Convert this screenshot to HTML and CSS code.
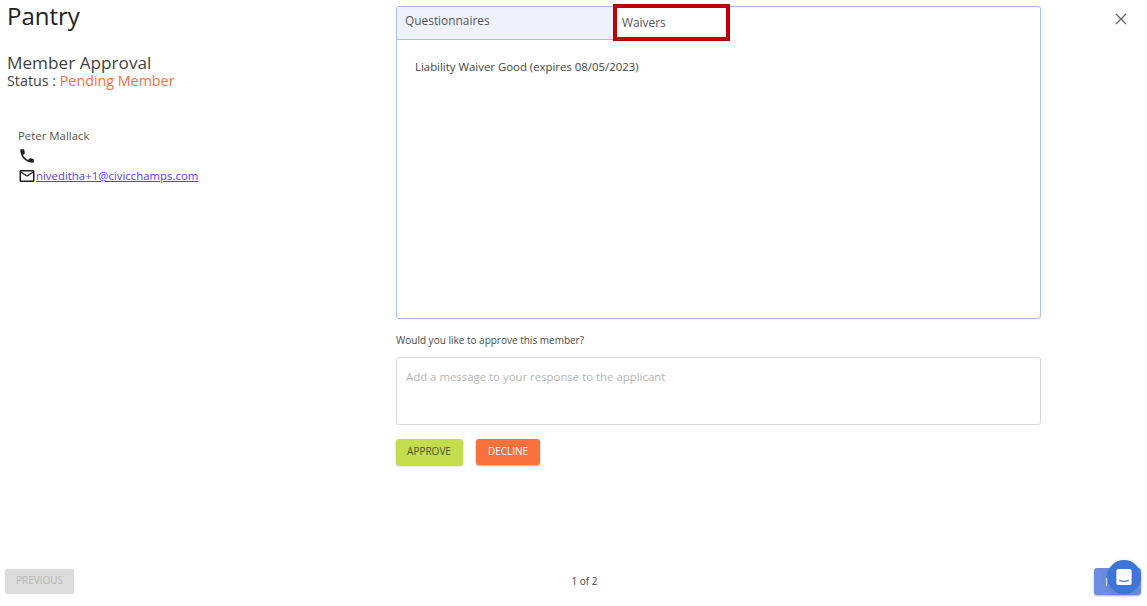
FILE: index.html
```html
<!DOCTYPE html>
<html lang="en">
<head>
<meta charset="utf-8">
<title>Member Approval</title>
<link rel="stylesheet" href="styles.css">
</head>
<body>
<div class="page">
  <div class="content">
    <aside class="side">
      <h1 class="org">Pantry</h1>
      <h2 class="title">Member Approval</h2>
      <div class="status">Status : <span class="pending">Pending Member</span></div>
      <div class="person">
        <div class="name">Peter Mallack</div>
        <div class="row">
          <svg class="icon" viewBox="0 0 24 24" width="18" height="18"><path fill="#1f1f1f" d="M6.62 10.79c1.44 2.83 3.76 5.14 6.59 6.59l2.2-2.2c.27-.27.67-.36 1.02-.24 1.12.37 2.33.57 3.57.57.55 0 1 .45 1 1V20c0 .55-.45 1-1 1-9.39 0-17-7.61-17-17 0-.55.45-1 1-1h3.5c.55 0 1 .45 1 1 0 1.25.2 2.45.57 3.57.11.35.03.74-.25 1.02l-2.2 2.2z"/></svg>
        </div>
        <div class="row">
          <svg class="icon" viewBox="0 0 24 24" width="18" height="18"><path fill="#1f1f1f" d="M22 6c0-1.1-.9-2-2-2H4c-1.1 0-2 .9-2 2v12c0 1.100.9 2 2 2h16c1.100 0 2-.9 2-2V6zm-2 0-8 5-8-5h16zm0 12H4V8l8 5 8-5v10z"/></svg>
          <a class="mail" href="#">niveditha+1@civicchamps.com</a>
        </div>
      </div>
    </aside>
    <main class="main">
      <div class="panel">
        <div class="tabs">
          <div class="tab tab-off">Questionnaires</div>
          <div class="tab tab-on">Waivers</div>
        </div>
        <div class="panel-body">Liability Waiver Good (expires 08/05/2023)</div>
      </div>
      <div class="ask">Would you like to approve this member?</div>
      <div class="message">Add a message to your response to the applicant</div>
      <div class="actions">
        <button class="btn approve">APPROVE</button>
        <button class="btn decline">DECLINE</button>
      </div>
    </main>
    <button class="close" aria-label="Close">
      <svg viewBox="0 0 12 12" width="12" height="12"><path d="M1 1l10 10M11 1L1 11" stroke="#666" stroke-width="1.3" fill="none"/></svg>
    </button>
  </div>
  <footer class="footer">
    <button class="btn prev">PREVIOUS</button>
    <div class="count">1 of 2</div>
    <button class="btn next">NEXT</button>
  </footer>
</div>
<div class="chat">
  <svg viewBox="0 0 22 24" width="16" height="18"><path fill="#fff" d="M3 1h16a2.500 2.500 0 0 1 2.500 2.500v17a2.500 2.500 0 0 1-2.500 2.500H3A2.500 2.500 0 0 1 .5 20.500v-17A2.500 2.500 0 0 1 3 1z"/><path d="M5 16.500c3.500 2 8.500 2 12 0" stroke="#3f74d8" stroke-width="1.600" fill="none" stroke-linecap="round"/></svg>
</div>
</body>
</html>
```
FILE: styles.css
```css
* { box-sizing: border-box; }
html, body { margin: 0; height: 606px; overflow: hidden; background: #fff; }
body { font-family: "Open Sans", sans-serif; color: #3f3f3f; }
.page { height: 606px; display: flex; flex-direction: column; }
.content { flex: 1; display: flex; align-items: flex-start; position: relative; }
.side { width: 396px; padding: 0 0 0 7px; flex: none; }
.org { margin: 0; font-size: 24px; font-weight: 400; line-height: 32px; color: #222; }
.title { margin: 19px 0 0; font-size: 17.2px; font-weight: 400; line-height: 23px; color: #3f3f3f; }
.status { font-size: 14.3px; line-height: 14px; color: #3f3f3f; }
.pending { color: #f76f3b; }
.person { margin: 39px 0 0 11px; font-size: 11.4px; }
.name { line-height: 18px; color: #555; margin-bottom: 1px; }
.row { display: flex; align-items: center; height: 20px; }
.icon { flex: none; }
.mail { color: #5a3df5; font-size: 11.4px; margin-bottom: 2px; }
.main { width: 645px; flex: none; padding-top: 6px; }
.panel { height: 313px; border: 1px solid #a6bdf0; border-radius: 3px; }
.tabs { display: flex; height: 33px; }
.tab { font-size: 11.9px; color: #555; }
.tab-off { width: 216px; background: #eef2fd; border-bottom: 1px solid #a6bdf0; padding: 4px 0 0 8px; border-radius: 3px 0 0 0; line-height: 18px; }
.tab-on { width: 117px; height: 37px; margin-top: -3px; border: 4px solid #bf0000; padding: 5px 0 0 5px; line-height: 18px; background: #fff; position: relative; }
.panel-body { padding: 18px 18px; font-size: 11.4px; line-height: 18px; color: #444; }
.ask { margin-top: 13px; font-size: 10px; line-height: 17px; color: #4a4a4a; }
.message { margin-top: 8px; height: 68px; border: 1px solid #d8d8d8; border-radius: 3px; padding: 10px 9px; font-size: 11.4px; line-height: 18px; color: #b5b5b5; }
.actions { display: flex; gap: 13px; margin-top: 14px; }
.btn { border: 0; border-radius: 3px; font-family: "Open Sans", sans-serif; font-size: 10px; padding: 0 0 3px; box-shadow: 0 1px 2px rgba(0,0,0,.3); }
.approve { width: 67px; height: 26px; background: #c2de4c; color: #49551c; padding-right: 1px; }
.decline { width: 64px; height: 26px; background: #f6713c; color: #fff; font-weight: 500; }
.close { position: absolute; top: 12px; left: 1114px; width: 13px; height: 13px; padding: 0; border: 0; background: none; line-height: 0; }
.footer { height: 38px; flex: none; display: flex; align-items: flex-start; justify-content: space-between; padding: 0 6px 0 5px; }
.prev { width: 69px; height: 25px; margin-top: 1px; background: #dcdcdc; color: #b5b5b5; box-shadow: 0 0 1px rgba(0,0,0,.15); }
.count { font-size: 10px; line-height: 17px; margin: 5px 0 0 1px; color: #444; }
.next { width: 47px; height: 27px; background: #6a8de0; color: #fff; text-align: left; padding-left: 11px; padding-bottom: 0; }
.chat { position: absolute; left: 1107px; top: 560px; width: 34px; height: 34px; border-radius: 50%; background: #3f74d8; display: flex; align-items: center; justify-content: center; box-shadow: 0 1px 6px rgba(0,0,0,.1); }
```
